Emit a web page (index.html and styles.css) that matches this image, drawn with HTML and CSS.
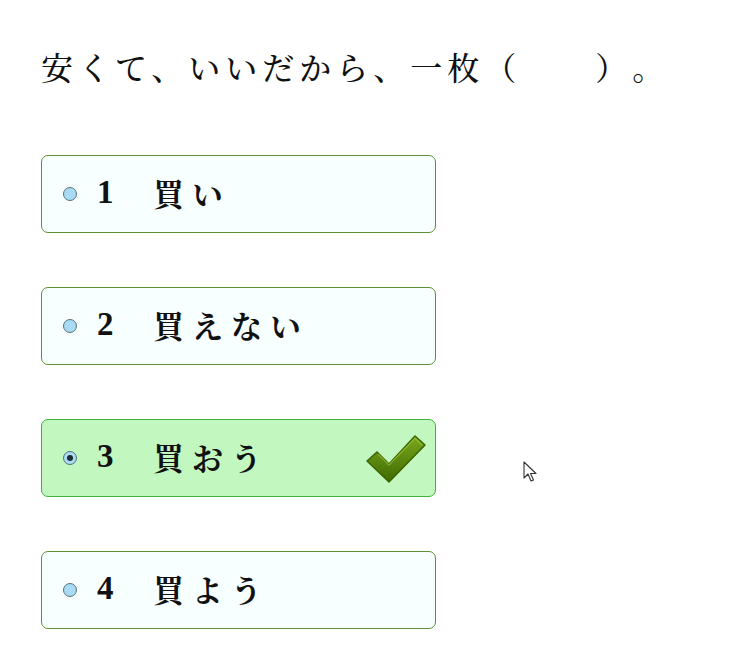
FILE: index.html
```html
<!DOCTYPE html>
<html lang="ja">
<head>
<meta charset="utf-8">
<link rel="stylesheet" href="styles.css">
</head>
<body>
<div class="page">
  <p class="question">安くて、いいだから、一枚（　　）。</p>
  <ul class="options">
    <li class="option">
      <span class="radio"></span>
      <span class="num">1</span>
      <span class="label">買い</span>
    </li>
    <li class="option">
      <span class="radio"></span>
      <span class="num">2</span>
      <span class="label">買えない</span>
    </li>
    <li class="option option-correct">
      <span class="radio radio-checked"></span>
      <span class="num">3</span>
      <span class="label">買おう</span>
      <svg class="check" viewBox="0 0 62 50" width="62" height="50">
        <defs>
          <linearGradient id="cg" x1="0" y1="0" x2="0" y2="1">
            <stop offset="0" stop-color="#7aa81c"/>
            <stop offset="1" stop-color="#3f6a02"/>
          </linearGradient>
        </defs>
        <path d="M2 27 L12 18 L24 30 L50 2 L60 11 L24 48 Z" fill="url(#cg)" stroke="#3c6300" stroke-width="1.5" stroke-linejoin="round"/>
        <path d="M13 20 L24 31 L50 4 L57 11" fill="none" stroke="#9cc843" stroke-width="1.2" opacity="0.7"/>
      </svg>
    </li>
    <li class="option">
      <span class="radio"></span>
      <span class="num">4</span>
      <span class="label">買よう</span>
    </li>
  </ul>
  <svg class="cursor" viewBox="0 0 14 22" width="14" height="22">
    <path d="M1 1 L1 17 L5 13 L8 20 L10.5 19 L7.5 12.5 L13 12.5 Z" fill="#fff" stroke="#333" stroke-width="1.1" stroke-linejoin="round"/>
  </svg>
</div>
</body>
</html>
```

FILE: styles.css
```css
html, body {
  margin: 0;
  padding: 0;
  background: #ffffff;
}

.page {
  position: relative;
  width: 733px;
  height: 648px;
  padding: 45px 0 0 41px;
  box-sizing: border-box;
  font-family: "Noto Serif CJK JP", "Liberation Serif", "Noto Sans CJK JP", serif;
  color: #111;
  text-spacing-trim: space-all;
}

.question {
  margin: 0;
  font-size: 32px;
  line-height: 42px;
  letter-spacing: 5px;
  font-weight: 500;
}

.options {
  list-style: none;
  margin: 68px 0 0 0;
  padding: 0;
  display: flex;
  flex-direction: column;
  gap: 54px;
}

.option {
  width: 395px;
  height: 78px;
  box-sizing: border-box;
  border: 1.5px solid #5f8f34;
  border-radius: 7px;
  background: #f7ffff;
  display: flex;
  align-items: center;
  padding-left: 21px;
  padding-bottom: 4px;
}

.option-correct {
  background: #c2f7bf;
  border-color: #41b23c;
}

.radio {
  width: 12px;
  height: 12px;
  border-radius: 50%;
  border: 1.5px solid #55707a;
  background: #a9dcf4;
  flex: none;
  position: relative;
  margin-top: 4px;
}

.radio-checked::after {
  content: "";
  position: absolute;
  left: 3px;
  top: 3px;
  width: 6px;
  height: 6px;
  border-radius: 50%;
  background: #1d2a30;
}

.num {
  font-family: "Liberation Serif", serif;
  font-weight: bold;
  font-size: 33px;
  width: 56px;
  margin-left: 20px;
  flex: none;
}

.label {
  font-size: 31px;
  letter-spacing: 8px;
  font-weight: 700;
  flex: 1;
}

.check {
  flex: none;
  margin-right: 8px;
  margin-top: 5px;
}

.cursor {
  position: absolute;
  left: 523px;
  top: 461px;
}
```
